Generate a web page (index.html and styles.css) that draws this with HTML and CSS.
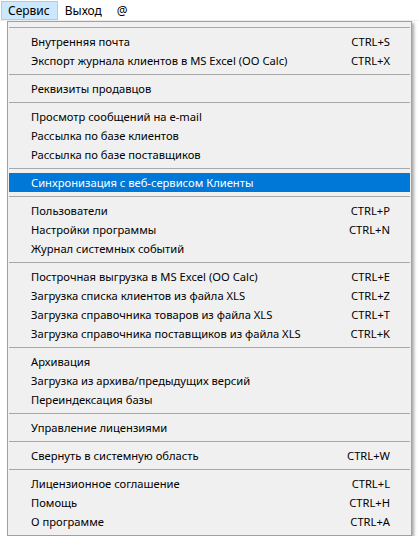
FILE: index.html
```html
<!DOCTYPE html>
<html lang="ru">
<head>
<meta charset="utf-8">
<title>Сервис</title>
<link rel="stylesheet" href="styles.css">
</head>
<body>
<div class="menubar">
  <div class="bar-item active">Сервис</div>
  <div class="bar-item">Выход</div>
  <div class="bar-item">@</div>
</div>
<div class="dropdown">
  <div class="sep"></div>
  <div class="item"><span>Внутренняя почта</span><span class="key">CTRL+S</span></div>
  <div class="item"><span>Экспорт журнала клиентов в MS Excel (OO Calc)</span><span class="key">CTRL+X</span></div>
  <div class="sep"></div>
  <div class="item"><span>Реквизиты продавцов</span></div>
  <div class="sep"></div>
  <div class="item"><span>Просмотр сообщений на e-mail</span></div>
  <div class="item"><span>Рассылка по базе клиентов</span></div>
  <div class="item"><span>Рассылка по базе поставщиков</span></div>
  <div class="sep"></div>
  <div class="item selected"><span>Синхронизация с веб-сервисом Клиенты</span></div>
  <div class="sep"></div>
  <div class="item"><span>Пользователи</span><span class="key">CTRL+P</span></div>
  <div class="item"><span>Настройки программы</span><span class="key">CTRL+N</span></div>
  <div class="item"><span>Журнал системных событий</span></div>
  <div class="sep"></div>
  <div class="item"><span>Построчная выгрузка в MS Excel (OO Calc)</span><span class="key">CTRL+E</span></div>
  <div class="item"><span>Загрузка списка клиентов из файла XLS</span><span class="key">CTRL+Z</span></div>
  <div class="item"><span>Загрузка справочника товаров из файла XLS</span><span class="key">CTRL+T</span></div>
  <div class="item"><span>Загрузка справочника поставщиков из файла XLS</span><span class="key">CTRL+K</span></div>
  <div class="sep"></div>
  <div class="item"><span>Архивация</span></div>
  <div class="item"><span>Загрузка из архива/предыдущих версий</span></div>
  <div class="item"><span>Переиндексация базы</span></div>
  <div class="sep"></div>
  <div class="item"><span>Управление лицензиями</span></div>
  <div class="sep"></div>
  <div class="item"><span>Свернуть в системную область</span><span class="key">CTRL+W</span></div>
  <div class="sep"></div>
  <div class="item"><span>Лицензионное соглашение</span><span class="key">CTRL+L</span></div>
  <div class="item"><span>Помощь</span><span class="key">CTRL+H</span></div>
  <div class="item"><span>О программе</span><span class="key">CTRL+A</span></div>
</div>
</body>
</html>
```

FILE: styles.css
```css
html, body {
  margin: 0;
  padding: 0;
  background: #ffffff;
}
body {
  font-family: "Noto Sans", "Open Sans", sans-serif;
  font-size: 11.2px;
  color: #000000;
}
.menubar {
  display: flex;
  align-items: stretch;
  height: 20px;
  border-bottom: 1px solid #f0f0f0;
  padding-left: 1px;
  box-sizing: content-box;
  font-size: 12px;
}
.bar-item {
  display: flex;
  align-items: center;
  padding: 0 7px 0 6px;
  margin-top: 1px;
  height: 19px;
  box-sizing: border-box;
  border: 1px solid transparent;
}
.bar-item.active {
  background: #cce8ff;
  border-color: #99d1ff;
}
.dropdown {
  width: 403px;
  margin-left: 7px;
  border: 1px solid #a0a0a0;
  background: #f0f0f0;
  padding: 1px 0 4px 0;
  box-shadow: 2px 2px 3px rgba(0, 0, 0, 0.35);
}
.sep {
  height: 9px;
  display: flex;
  align-items: center;
  margin: 0 1px;
}
.sep::before {
  content: "";
  display: block;
  width: 100%;
  height: 1px;
  background: #a8a8a8;
}
.item {
  height: 19px;
  display: flex;
  align-items: center;
  justify-content: space-between;
  margin: 0 1px;
  padding: 0 20px 0 22px;
  white-space: nowrap;
}
.item.selected {
  background: #0078d7;
  color: #ffffff;
}
.key {
  text-align: right;
}
```
